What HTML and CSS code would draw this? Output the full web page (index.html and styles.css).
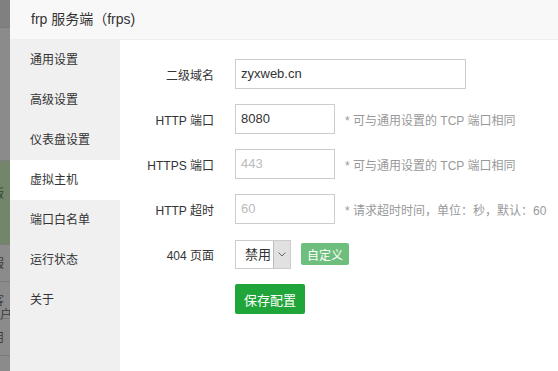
FILE: index.html
```html
<!DOCTYPE html>
<html lang="zh-CN">
<head>
    <meta charset="UTF-8">
    <title>frp 服务端</title>
    <link rel="stylesheet" href="styles.css">
</head>
<body>
    <div class="backdrop">
        <div class="bd-top"></div>
        <div class="bd-gap"></div>
        <div class="bd-green">版</div>
        <div class="bd-row">服</div>
        <div class="bd-row">客户</div>
        <div class="bd-row">用</div>
    </div>

    <div class="dialog">
        <div class="dialog-title">frp 服务端（frps)</div>
        <div class="dialog-body">
            <ul class="tab-menu">
                <li>通用设置</li>
                <li>高级设置</li>
                <li>仪表盘设置</li>
                <li class="active">虚拟主机</li>
                <li>端口白名单</li>
                <li>运行状态</li>
                <li>关于</li>
            </ul>
            <div class="tab-content">
                <div class="line">
                    <span class="tname">二级域名</span>
                    <div class="info-r">
                        <div class="bt-input wide">zyxweb.cn</div>
                    </div>
                </div>
                <div class="line">
                    <span class="tname">HTTP 端口</span>
                    <div class="info-r">
                        <div class="bt-input">8080</div>
                        <span class="tips">* 可与通用设置的 TCP 端口相同</span>
                    </div>
                </div>
                <div class="line">
                    <span class="tname">HTTPS 端口</span>
                    <div class="info-r">
                        <div class="bt-input placeholder">443</div>
                        <span class="tips">* 可与通用设置的 TCP 端口相同</span>
                    </div>
                </div>
                <div class="line">
                    <span class="tname">HTTP 超时</span>
                    <div class="info-r">
                        <div class="bt-input placeholder">60</div>
                        <span class="tips">* 请求超时时间，单位：秒，默认：60</span>
                    </div>
                </div>
                <div class="line">
                    <span class="tname">404 页面</span>
                    <div class="info-r">
                        <div class="bt-select">
                            <span class="sel-text">禁用</span>
                            <span class="sel-arrow">
                                <svg width="8" height="5" viewBox="0 0 8 5"><path d="M0.5 0.5 L4 4 L7.5 0.5" fill="none" stroke="#666" stroke-width="1"/></svg>
                            </span>
                        </div>
                        <button class="btn btn-light">自定义</button>
                    </div>
                </div>
                <div class="line">
                    <span class="tname"></span>
                    <div class="info-r">
                        <button class="btn btn-save">保存配置</button>
                    </div>
                </div>
            </div>
        </div>
    </div>
</body>
</html>
```

FILE: styles.css
```css
* {
    margin: 0;
    padding: 0;
    box-sizing: border-box;
}

body {
    width: 558px;
    height: 371px;
    overflow: hidden;
    display: flex;
    font-family: 'Liberation Sans', 'Noto Sans CJK SC', sans-serif;
    font-size: 12px;
    color: #333;
    background: #fff;
}

/* dimmed page behind the layer */
.backdrop {
    width: 10px;
    flex: 0 0 10px;
    display: flex;
    flex-direction: column;
    background: #8b8b8b;
    overflow: hidden;
    color: #3c3c3c;
    font-size: 12px;
    line-height: 14px;
}

.bd-top {
    height: 28px;
    background: #808080;
    border-bottom: 1px solid #7a7a7a;
}

.bd-gap {
    height: 133px;
    border-bottom: 1px solid #7e7e7e;
}

.bd-green {
    height: 84px;
    background: #73866b;
    padding-top: 26px;
    text-indent: -8px;
    color: #2f4a28;
    border-bottom: 1px solid #7c7c7c;
}

.bd-row {
    height: 37px;
    padding-top: 12px;
    text-indent: -8px;
    border-bottom: 1px solid #7a7a7a;
}

.dialog {
    flex: 1;
    display: flex;
    flex-direction: column;
    background: #fff;
}

.dialog-title {
    height: 40px;
    line-height: 39px;
    padding-left: 21px;
    font-size: 14px;
    color: #333;
    background: #f8f8f8;
    border-bottom: 1px solid #eee;
}

.dialog-body {
    flex: 1;
    display: flex;
}

.tab-menu {
    list-style: none;
    width: 110px;
    flex: 0 0 110px;
    background: #f0f0f0;
}

.tab-menu li {
    height: 40px;
    line-height: 40px;
    padding-left: 20px;
    font-size: 12px;
    color: #333;
}

.tab-menu li.active {
    background: #fff;
}

.tab-content {
    flex: 1;
    padding-top: 19px;
    display: flex;
    flex-direction: column;
    gap: 15px;
}

.line {
    display: flex;
    align-items: center;
    height: 30px;
}

.tname {
    width: 95px;
    padding-right: 1px;
    text-align: right;
    color: #333;
    margin-right: 20px;
}

.info-r {
    display: flex;
    align-items: center;
}

.bt-input {
    width: 100px;
    height: 30px;
    line-height: 28px;
    padding-left: 5px;
    border: 1px solid #ccc;
    font-size: 13px;
    color: #333;
}

.bt-input.wide {
    width: 231px;
}

.bt-input.placeholder {
    color: #bbb;
}

.tips {
    margin-left: 10px;
    color: #999;
}

.bt-select {
    display: flex;
    width: 56px;
    height: 29px;
    border: 1px solid #ccc;
}

.sel-text {
    flex: 1;
    line-height: 27px;
    padding-left: 9px;
    font-size: 13px;
    color: #333;
}

.sel-arrow {
    width: 17px;
    display: flex;
    align-items: center;
    justify-content: center;
    background: #e1e1e1;
    border-left: 1px solid #bbb;
}

.btn {
    border: 0;
    border-radius: 2px;
    color: #fff;
    font-family: inherit;
    cursor: pointer;
}

.btn-light {
    margin-left: 10px;
    width: 48px;
    height: 22px;
    font-size: 12px;
    background: #6ebf7d;
}

.btn-save {
    width: 70px;
    height: 30px;
    font-size: 13px;
    background: #20a53a;
}
```
